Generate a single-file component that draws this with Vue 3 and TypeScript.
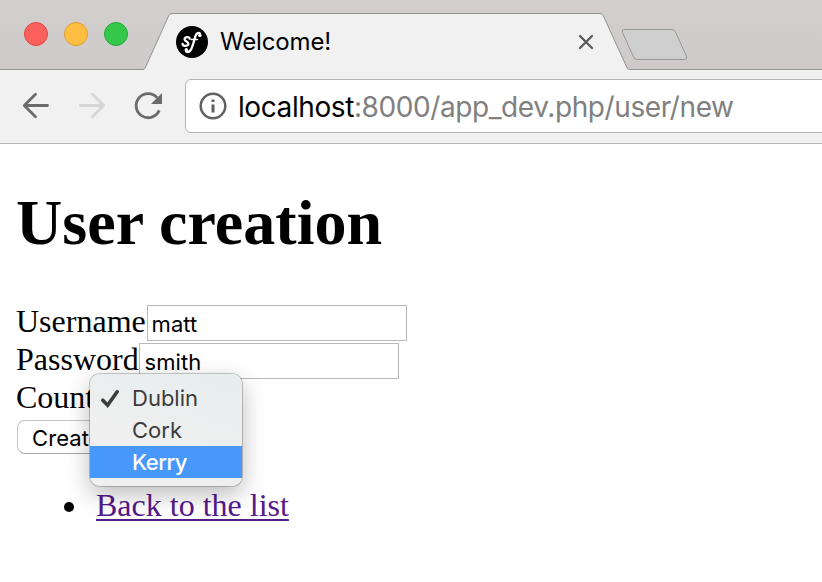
<script setup lang="ts">
import { ref } from 'vue'

const username = ref('matt')
const password = ref('smith')
const countries: string[] = ['Dublin', 'Cork', 'Kerry']
const selected = ref('Dublin')
const highlighted = ref('Kerry')
const lights: string[] = ['close', 'minimise', 'zoom']
</script>

<template>
  <div class="window">
    <header class="tabstrip">
      <svg class="tab-shapes" width="822" height="70" viewBox="0 0 822 70">
        <path d="M0 69.5H143Q144.500 69.500 145.300 67.800L168.800 15.500Q169.900 13.500 172 13.500H600Q602.200 13.500 603.200 15.500L627 67.800Q627.800 69.500 629.500 69.500H822V71H0Z" fill="#f1f1f1" stroke="#929292" />
        <path d="M624.500 29.500H672Q674.300 29.500 675.300 31.500L686.600 56.500Q687.500 59.500 684.500 59.500H637Q634.800 59.500 633.500 57L622.500 32.500Q621.500 29.500 624.500 29.500Z" fill="#cfcfcf" stroke="#979797" />
      </svg>
      <div class="lights">
        <span v-for="l in lights" :key="l" class="light" :class="l"></span>
      </div>
      <div class="tab">
        <svg class="favicon" width="32" height="32" viewBox="0 0 32 32">
          <circle cx="16" cy="16" r="16" fill="#000" />
          <g fill="none" stroke="#fff" stroke-linecap="round" stroke-linejoin="round">
            <path d="M13.600 12.700C14 10.300 8.600 10.500 8.600 13.200C8.600 15.400 12.900 15.700 12.400 18C11.900 20.500 6.600 20.400 6.600 18" stroke-width="2.300" />
            <path d="M24 9.600C24.900 6 21.300 6.100 19.700 9.500C18 13.500 17 21 14.500 24.200C12.400 26.900 9.300 26.300 10 24" stroke-width="2.300" />
            <path d="M15.200 13.500H21.500" stroke-width="1.500" />
          </g>
          <circle cx="23.800" cy="9.400" r="1.700" fill="#fff" />
          <circle cx="10.300" cy="23.800" r="1.700" fill="#fff" />
        </svg>
        <span class="tab-title">Welcome!</span>
        <svg class="tab-close" width="16" height="16" viewBox="0 0 16 16">
          <path d="M2 2L14 14M14 2L2 14" stroke="#5a5a5a" stroke-width="2.300" stroke-linecap="round" />
        </svg>
      </div>
    </header>

    <nav class="toolbar">
      <svg class="nav-icons" width="142" height="30" viewBox="0 0 142 30">
        <g fill="none" stroke-width="2.800" stroke-linecap="round" stroke-linejoin="round">
          <path d="M25.500 14.500H2.500M13.500 3.200L2.300 14.500L13.500 25.800" stroke="#6b6b6b" />
          <path d="M58.500 14.500H81.500M70.500 3.200L81.700 14.500L70.500 25.800" stroke="#d6d6d6" />
          <path d="M135.200 6.800A12 12 0 1 0 137.200 19.400" stroke="#6b6b6b" stroke-linecap="butt" />
        </g>
        <path d="M140 2V13H129Z" fill="#6b6b6b" />
      </svg>
      <div class="address">
        <svg width="28" height="28" viewBox="0 0 28 28">
          <circle cx="14" cy="14" r="12.300" fill="none" stroke="#606060" stroke-width="2.500" />
          <path d="M12.500 7.500H15.500V10H12.500ZM12.500 12.500H15.500V20.500H12.500Z" fill="#606060" />
        </svg>
        <span class="url"><b>localhost</b>:8000/app_dev.php/user/new</span>
      </div>
    </nav>

    <main class="page">
      <h1>User creation</h1>
      <form @submit.prevent>
        <div class="row"><label for="u">Username</label><input id="u" v-model="username" type="text"></div>
        <div class="row"><label for="p">Password</label><input id="p" v-model="password" type="text"></div>
        <div class="row country">
          <label>Country</label>
          <ul class="menu">
            <li v-for="c in countries" :key="c" :class="{ active: c === highlighted }">
              <svg v-if="c === selected" class="check" width="20" height="20" viewBox="0 0 20 20">
                <path d="M2.800 11.200L7.600 16.200L17.200 2.800" fill="none" stroke="#3c3c3c" stroke-width="3.600" stroke-linecap="round" />
              </svg>
              {{ c }}
            </li>
          </ul>
        </div>
        <button type="submit">Create</button>
      </form>
      <ul class="links">
        <li><a href="#">Back to the list</a></li>
      </ul>
    </main>
  </div>
</template>

<style>
body {
  margin: 0;
  background: #fff;
  overflow: hidden;
}
</style>

<style scoped>
* {
  box-sizing: border-box;
}
.window {
  width: 822px;
  height: 582px;
  overflow: hidden;
  background: #fff;
}
.tabstrip {
  position: relative;
  display: flex;
  height: 70px;
  background: linear-gradient(180deg, #d2cfce, #cdcac9);
}
.tab-shapes {
  position: absolute;
  inset: 0;
}
.lights {
  display: flex;
  gap: 16px;
  padding: 22px 0 0 24px;
  width: 176px;
  flex: none;
}
.light {
  width: 24px;
  height: 24px;
  border-radius: 50%;
  border: 1px solid;
}
.close {
  background: #fc605c;
  border-color: #e24640;
}
.minimise {
  background: #fdbe41;
  border-color: #e09f29;
}
.zoom {
  background: #34c84a;
  border-color: #23a934;
}
.tab {
  position: relative;
  display: flex;
  align-items: center;
  width: 418px;
  height: 32px;
  margin-top: 26px;
}
.tab-title {
  flex: 1;
  margin-left: 12px;
  font: 24px/32px Inter, sans-serif;
  letter-spacing: -0.15px;
  color: #000;
}
.toolbar {
  display: flex;
  height: 74px;
  padding: 9px 0 0 22px;
  background: #f1f1f1;
  border-bottom: 1px solid #b5b5b5;
}
.nav-icons {
  flex: none;
  margin: 12px 21px 0 0;
}
.address {
  display: flex;
  align-items: center;
  flex: none;
  width: 660px;
  height: 54px;
  padding-left: 12.5px;
  border: 1px solid #b4b4b4;
  border-radius: 6px;
  background: #fff;
}
.url {
  margin: 2px 0 0 11.5px;
  font: 28px/36px Inter, sans-serif;
  letter-spacing: -0.41px;
  color: #808080;
  white-space: nowrap;
}
.url b {
  font-weight: 400;
  color: #000;
}
.page {
  padding: 41px 16px 0;
  font: 32px/38px "Liberation Serif", serif;
  color: #000;
}
h1 {
  margin: 0 0 43px;
  font-size: 64px;
  line-height: 76px;
  letter-spacing: 0.05px;
}
.row {
  display: flex;
  height: 38px;
  align-items: center;
}
label {
  margin-bottom: 4px;
}
input {
  width: 260px;
  height: 36px;
  margin: 0 0 0 0.8px;
  padding: 2px 4px 0;
  border: 1px solid #b9b9b9;
  outline: none;
  font: 22px/30px Inter, sans-serif;
  letter-spacing: 0.1px;
  color: #000;
  background: #fff;
}
.country {
  position: relative;
}
.menu {
  position: absolute;
  left: 74px;
  top: -6px;
  width: 152px;
  height: 112px;
  margin: 0;
  padding: 8px 0;
  list-style: none;
  border-radius: 10px;
  background: linear-gradient(200deg, #e8eeee 10%, #efefef 60%);
  box-shadow: 0 0 0 1px rgba(0, 0, 0, 0.2), 0 8px 24px rgba(0, 0, 0, 0.28);
  font: 22px/32px Inter, sans-serif;
  color: #3c3c3c;
}
.menu li {
  position: relative;
  height: 32px;
  padding-left: 42px;
}
.menu .active {
  background: #4898fc;
  color: #fff;
  font-weight: 500;
  letter-spacing: -0.5px;
}
.check {
  position: absolute;
  left: 10px;
  top: 7px;
}
button {
  display: block;
  width: 110px;
  height: 34px;
  margin: 2px 0 0 1px;
  padding: 2px 0 0 14px;
  border: 1px solid #c4c4c4;
  border-bottom-color: #a9a9a9;
  border-radius: 8px;
  background: #fff;
  text-align: left;
  font: 22px/30px Inter, sans-serif;
  letter-spacing: 0.1px;
  color: #000;
}
.links {
  margin: 32px 0 0;
  padding-left: 48px;
  list-style: none;
}
.links li {
  display: flex;
  align-items: center;
}
.links li::before {
  content: "";
  width: 10px;
  height: 10px;
  margin: 3px 22px 0 0;
  border-radius: 50%;
  background: #000;
}
a {
  color: #551a8b;
  text-decoration-thickness: 2px;
  text-underline-offset: 3px;
  text-decoration-skip-ink: none;
}
</style>
